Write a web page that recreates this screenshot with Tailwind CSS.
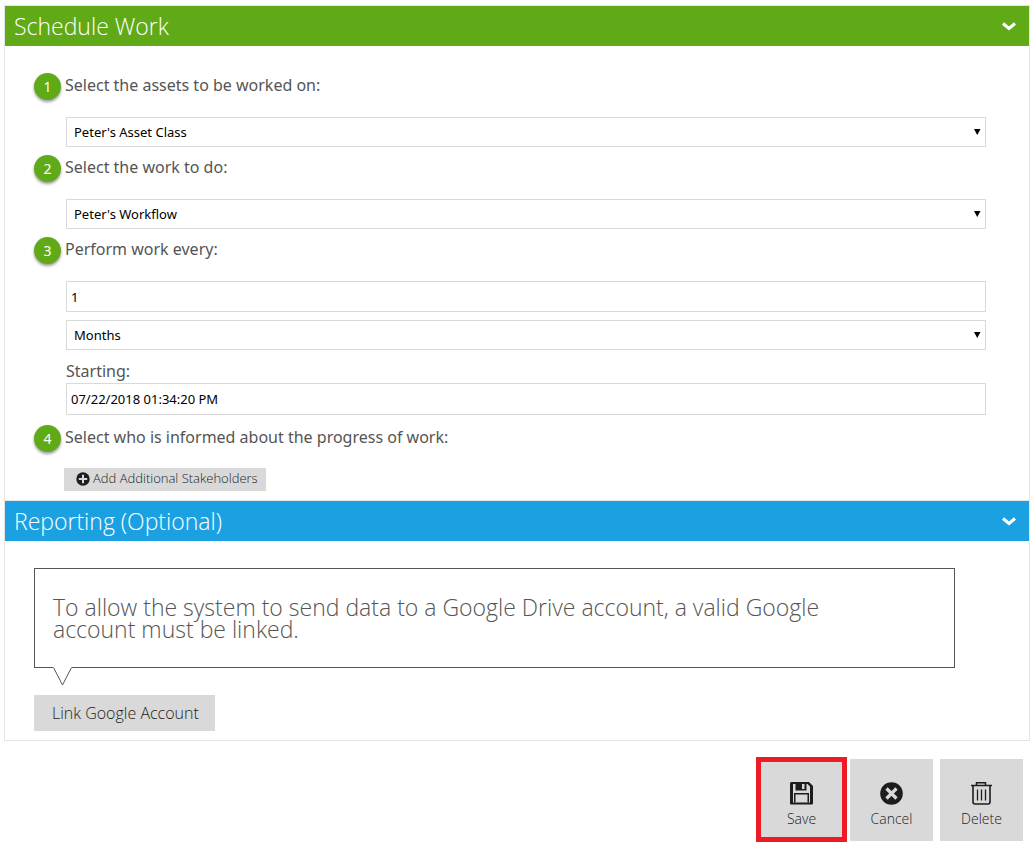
<!DOCTYPE html>
<html lang="en">
<head>
    <meta charset="UTF-8">
    <meta name="viewport" content="width=device-width, initial-scale=1.0">
    <title>Schedule Work</title>
    <script src="https://cdn.jsdelivr.net/npm/@tailwindcss/browser@4"></script>
</head>
<body class="bg-white font-['Open_Sans',sans-serif] text-[#555]">
    <main class="pl-1 pr-[6px] pt-[5px]">
        <!-- Schedule work -->
        <section class="border border-b-0 border-[#e5e5e5]">
            <h2>
                <button type="button" class="flex h-10 w-full items-center justify-between bg-[#60a917] pl-[9px] pr-3 text-[23px] font-light text-white">
                    <span>Schedule Work</span>
                    <svg class="h-4 w-4" viewBox="0 0 16 16" fill="none" stroke="currentColor" stroke-width="3"><path d="M2 5.500 8 10.500l6-5"/></svg>
                </button>
            </h2>
            <div class="pt-[27px] pr-[43px] pb-[9px] pl-[29px] font-['Noto_Sans',sans-serif]">
                <div class="mb-2">
                    <div class="mb-[17px] flex h-[27px] items-start gap-1">
                        <span class="flex h-[27px] w-[27px] items-center justify-center rounded-full bg-[#60a917] text-sm text-white shadow-[0_2px_3px_rgba(0,0,0,0.4)]">1</span>
                        <label for="assets" class="text-base">Select the assets to be worked on:</label>
                    </div>
                    <div class="relative ml-8">
                        <select id="assets" class="block h-[30px] w-full appearance-none border border-[#d9d9d9] bg-white px-[7px] pt-px text-[13px] text-black">
                            <option>Peter's Asset Class</option>
                        </select>
                        <svg class="pointer-events-none absolute top-3 right-[5px] h-[6px] w-[7px]" viewBox="0 0 7 6"><path d="M0 0h6.500L3.250 6z"/></svg>
                    </div>
                </div>

                <div class="mb-2">
                    <div class="mb-[17px] flex h-[27px] items-start gap-1">
                        <span class="flex h-[27px] w-[27px] items-center justify-center rounded-full bg-[#60a917] text-sm text-white shadow-[0_2px_3px_rgba(0,0,0,0.4)]">2</span>
                        <label for="work" class="text-base">Select the work to do:</label>
                    </div>
                    <div class="relative ml-8">
                        <select id="work" class="block h-[30px] w-full appearance-none border border-[#d9d9d9] bg-white px-[7px] pt-px text-[13px] text-black">
                            <option>Peter's Workflow</option>
                        </select>
                        <svg class="pointer-events-none absolute top-3 right-[5px] h-[6px] w-[7px]" viewBox="0 0 7 6"><path d="M0 0h6.500L3.250 6z"/></svg>
                    </div>
                </div>

                <div class="mb-[10px]">
                    <div class="mb-[17px] flex h-[27px] items-start gap-1">
                        <span class="flex h-[27px] w-[27px] items-center justify-center rounded-full bg-[#60a917] text-sm text-white shadow-[0_2px_3px_rgba(0,0,0,0.4)]">3</span>
                        <label for="every" class="text-base">Perform work every:</label>
                    </div>
                    <div class="ml-8">
                        <input id="every" type="text" value="1" class="mb-2 block h-[31px] w-full border border-[#d9d9d9] bg-white px-1 text-[13px] text-black">
                        <div class="relative mb-[9px]">
                            <select aria-label="Unit" class="block h-[30px] w-full appearance-none border border-[#d9d9d9] bg-white px-[7px] pt-px text-[13px] text-black">
                                <option>Months</option>
                            </select>
                            <svg class="pointer-events-none absolute top-3 right-[5px] h-[6px] w-[7px]" viewBox="0 0 7 6"><path d="M0 0h6.500L3.250 6z"/></svg>
                        </div>
                        <label for="starting" class="block text-base">Starting:</label>
                        <input id="starting" type="text" value="07/22/2018 01:34:20 PM" class="block h-8 w-full border border-[#d9d9d9] bg-white px-1 text-[13px] text-black">
                    </div>
                </div>

                <div class="mb-4 flex h-[27px] items-start gap-1">
                    <span class="flex h-[27px] w-[27px] items-center justify-center rounded-full bg-[#60a917] text-sm text-white shadow-[0_2px_3px_rgba(0,0,0,0.4)]">4</span>
                    <span class="text-base">Select who is informed about the progress of work:</span>
                </div>
                <button type="button" class="ml-[30px] flex h-[23px] items-center gap-[3px] bg-[#d9d9d9] pr-2 pb-[2px] pl-3 font-['Open_Sans',sans-serif] text-[13px] font-light text-[#1d1d1d]">
                    <svg class="h-[14px] w-[14px]" viewBox="0 0 14 14"><circle cx="7" cy="7" r="6.700" fill="#1d1d1d"/><path d="M7 2.800v8.400M2.800 7h8.400" stroke="#d9d9d9" stroke-width="2"/></svg>
                    Add Additional Stakeholders
                </button>
            </div>
        </section>

        <!-- Reporting -->
        <section class="border border-[#e5e5e5]">
            <h2>
                <button type="button" class="flex h-10 w-full items-center justify-between bg-[#1ba1e2] pl-[9px] pr-3 text-[23px] font-light text-white">
                    <span>Reporting (Optional)</span>
                    <svg class="h-4 w-4" viewBox="0 0 16 16" fill="none" stroke="currentColor" stroke-width="3"><path d="M2 5.500 8 10.500l6-5"/></svg>
                </button>
            </h2>
            <div class="pt-[27px] pr-[74px] pb-[9px] pl-[29px]">
                <div class="relative mb-[27px] border border-[#555] pt-[27px] pr-[130px] pb-[27px] pl-[18px]">
                    <p class="text-[23px] leading-[22px] font-light">To allow the system to send data to a Google Drive account, a valid Google account must be linked.</p>
                    <svg class="absolute top-full left-[18px] h-[19px] w-[19px]" viewBox="0 0 19 19"><path d="M0 0h19v1L9.500 18 0 1z" fill="#fff"/><path d="M.5 .5 9.500 18 18.500 .5" fill="none" stroke="#555"/></svg>
                </div>
                <button type="button" class="block h-9 bg-[#d9d9d9] pr-4 pl-[18px] text-base font-light text-[#1d1d1d]">Link Google Account</button>
            </div>
        </section>

        <!-- Actions -->
        <div class="flex items-center justify-end pt-4 pr-[7px] text-[#1d1d1d]">
            <button type="button" class="mr-[3px] flex h-[85px] w-[91px] flex-col items-center border-5 border-[#ed1c24] bg-[#d9d9d9] pt-5 text-sm font-light">
                <svg class="mb-1 h-[23px] w-[23px]" viewBox="0 0 23 23" fill="#1d1d1d"><path fill-rule="evenodd" d="M1.500 0H19l4 4v17.500q0 1-1 1H1q-1 0-1-1v-20Q0 0 1.500 0zM3 2v18.500h17V4.500L17.500 2z"/><path fill-rule="evenodd" d="M5.500 1h11v7.500h-11zM12 2v5h2.500V2z"/><path d="M4 11h15v9.500h-1.500v-8h-12v8H4z"/></svg>
                Save
            </button>
            <button type="button" class="mr-[7px] flex h-[82px] w-[83px] flex-col items-center bg-[#d9d9d9] pt-[23px] text-sm font-light">
                <svg class="mb-1 h-[23px] w-[23px]" viewBox="0 0 23 23"><circle cx="11.500" cy="11.500" r="11.300" fill="#1d1d1d"/><path d="m6.500 6.500 10 10m0-10-10 10" stroke="#d9d9d9" stroke-width="3.200"/></svg>
                Cancel
            </button>
            <button type="button" class="flex h-[82px] w-[83px] flex-col items-center bg-[#d9d9d9] pt-[23px] text-sm font-light">
                <svg class="mb-1 h-[23px] w-[23px]" viewBox="0 0 23 23" fill="none" stroke="#1d1d1d"><path d="M1 3.500h21M6.500 3V.8h9V3" stroke-width="1.500"/><path d="M3 3.500V20q0 2 2 2h13q2 0 2-2V3.500" stroke-width="1.600"/><path d="M7.500 7.500v11M11.500 7.500v11M15.500 7.500v11" stroke-width="1.300"/></svg>
                Delete
            </button>
        </div>
    </main>
</body>
</html>
